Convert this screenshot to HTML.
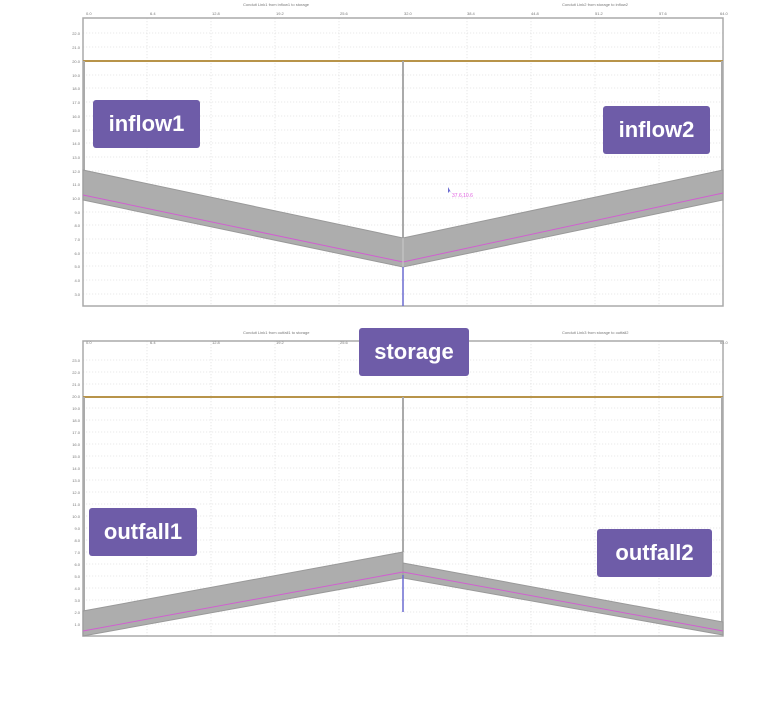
<!DOCTYPE html>
<html><head><meta charset="utf-8"><style>
html,body{margin:0;padding:0;background:#fff;width:764px;height:710px;overflow:hidden;font-family:"Liberation Sans",sans-serif}
.lbl{position:absolute;background:#6e5ca8;color:#fff;font-weight:bold;font-size:22px;border-radius:3px;display:flex;align-items:center;justify-content:center;box-sizing:border-box}
svg text{font-family:"Liberation Sans",sans-serif;fill:#777;font-size:4px}
</style></head><body>
<svg width="764" height="710" style="position:absolute;left:0;top:0">
<g stroke="#e2e2e2" stroke-width="0.8" stroke-dasharray="1.2,1.8">
<line x1="147" y1="18" x2="147" y2="306"/><line x1="211" y1="18" x2="211" y2="306"/><line x1="275" y1="18" x2="275" y2="306"/><line x1="339" y1="18" x2="339" y2="306"/><line x1="467" y1="18" x2="467" y2="306"/><line x1="531" y1="18" x2="531" y2="306"/><line x1="595" y1="18" x2="595" y2="306"/><line x1="659" y1="18" x2="659" y2="306"/>
<line x1="83" y1="33" x2="723" y2="33"/><line x1="83" y1="47" x2="723" y2="47"/><line x1="83" y1="75" x2="723" y2="75"/><line x1="83" y1="88" x2="723" y2="88"/><line x1="83" y1="102" x2="723" y2="102"/><line x1="83" y1="116" x2="723" y2="116"/><line x1="83" y1="130" x2="723" y2="130"/><line x1="83" y1="143" x2="723" y2="143"/><line x1="83" y1="157" x2="723" y2="157"/><line x1="83" y1="171" x2="723" y2="171"/><line x1="83" y1="184" x2="723" y2="184"/><line x1="83" y1="198" x2="723" y2="198"/><line x1="83" y1="212" x2="723" y2="212"/><line x1="83" y1="225" x2="723" y2="225"/><line x1="83" y1="239" x2="723" y2="239"/><line x1="83" y1="253" x2="723" y2="253"/><line x1="83" y1="266" x2="723" y2="266"/><line x1="83" y1="280" x2="723" y2="280"/><line x1="83" y1="294" x2="723" y2="294"/>
<line x1="147" y1="341" x2="147" y2="636"/><line x1="211" y1="341" x2="211" y2="636"/><line x1="275" y1="341" x2="275" y2="636"/><line x1="339" y1="341" x2="339" y2="636"/><line x1="467" y1="341" x2="467" y2="636"/><line x1="531" y1="341" x2="531" y2="636"/><line x1="595" y1="341" x2="595" y2="636"/><line x1="659" y1="341" x2="659" y2="636"/>
<line x1="83" y1="360" x2="723" y2="360"/><line x1="83" y1="372" x2="723" y2="372"/><line x1="83" y1="384" x2="723" y2="384"/><line x1="83" y1="408" x2="723" y2="408"/><line x1="83" y1="420" x2="723" y2="420"/><line x1="83" y1="432" x2="723" y2="432"/><line x1="83" y1="444" x2="723" y2="444"/><line x1="83" y1="456" x2="723" y2="456"/><line x1="83" y1="468" x2="723" y2="468"/><line x1="83" y1="480" x2="723" y2="480"/><line x1="83" y1="492" x2="723" y2="492"/><line x1="83" y1="504" x2="723" y2="504"/><line x1="83" y1="516" x2="723" y2="516"/><line x1="83" y1="528" x2="723" y2="528"/><line x1="83" y1="540" x2="723" y2="540"/><line x1="83" y1="552" x2="723" y2="552"/><line x1="83" y1="564" x2="723" y2="564"/><line x1="83" y1="576" x2="723" y2="576"/><line x1="83" y1="588" x2="723" y2="588"/><line x1="83" y1="600" x2="723" y2="600"/><line x1="83" y1="612" x2="723" y2="612"/><line x1="83" y1="624" x2="723" y2="624"/>
</g>
<text x="243" y="6">Conduit Link1 from inflow1 to storage</text>
<text x="562" y="6">Conduit Link2 from storage to inflow2</text>
<text x="243" y="334">Conduit Link1 from outfall1 to storage</text>
<text x="562" y="334">Conduit Link3 from storage to outfall2</text>
<g>
<text x="86" y="15">0.0</text><text x="150" y="15">6.4</text><text x="212" y="15">12.8</text><text x="276" y="15">19.2</text><text x="340" y="15">25.6</text><text x="404" y="15">32.0</text><text x="467" y="15">38.4</text><text x="531" y="15">44.8</text><text x="595" y="15">51.2</text><text x="659" y="15">57.6</text><text x="720" y="15">64.0</text>
<text x="86" y="344">0.0</text><text x="150" y="344">6.4</text><text x="212" y="344">12.8</text><text x="276" y="344">19.2</text><text x="340" y="344">25.6</text><text x="720" y="344">64.0</text>
</g>
<g text-anchor="end">
<text x="80" y="35">22.0</text><text x="80" y="49">21.0</text><text x="80" y="63">20.0</text><text x="80" y="77">19.0</text><text x="80" y="90">18.0</text><text x="80" y="104">17.0</text><text x="80" y="118">16.0</text><text x="80" y="132">15.0</text><text x="80" y="145">14.0</text><text x="80" y="159">13.0</text><text x="80" y="173">12.0</text><text x="80" y="186">11.0</text><text x="80" y="200">10.0</text><text x="80" y="214">9.0</text><text x="80" y="227">8.0</text><text x="80" y="241">7.0</text><text x="80" y="255">6.0</text><text x="80" y="268">5.0</text><text x="80" y="282">4.0</text><text x="80" y="296">3.0</text>
<text x="80" y="362">23.0</text><text x="80" y="374">22.0</text><text x="80" y="386">21.0</text><text x="80" y="398">20.0</text><text x="80" y="410">19.0</text><text x="80" y="422">18.0</text><text x="80" y="434">17.0</text><text x="80" y="446">16.0</text><text x="80" y="458">15.0</text><text x="80" y="470">14.0</text><text x="80" y="482">13.0</text><text x="80" y="494">12.0</text><text x="80" y="506">11.0</text><text x="80" y="518">10.0</text><text x="80" y="530">9.0</text><text x="80" y="542">8.0</text><text x="80" y="554">7.0</text><text x="80" y="566">6.0</text><text x="80" y="578">5.0</text><text x="80" y="590">4.0</text><text x="80" y="602">3.0</text><text x="80" y="614">2.0</text><text x="80" y="626">1.0</text>
</g>
<rect x="83" y="18" width="640" height="288" fill="none" stroke="#aaa" stroke-width="1.5"/>
<line x1="83" y1="61" x2="723" y2="61" stroke="#b8944a" stroke-width="2"/>
<line x1="403" y1="61" x2="403" y2="240" stroke="#aaa" stroke-width="2"/>
<line x1="84" y1="61" x2="84" y2="170" stroke="#aaa" stroke-width="2"/>
<line x1="722" y1="61" x2="722" y2="170" stroke="#aaa" stroke-width="2"/>
<polygon points="83,170 403,238 723,170 723,200 403,267 83,200" fill="#adadad" stroke="#999" stroke-width="1"/>
<polyline points="83,195 403,262 723,193" fill="none" stroke="#d060d0" stroke-width="1"/>
<line x1="403" y1="238" x2="403" y2="267" stroke="#ccc" stroke-width="1"/>
<line x1="403" y1="267" x2="403" y2="306" stroke="#6a6ad0" stroke-width="1.5"/>
<path d="M448,187 L448,193 L450,191 L452,194 Z" fill="#6a6ad0"/>
<text x="452" y="197" style="fill:#e060e0;font-size:5px">37.6,10.6</text>
<rect x="83" y="341" width="640" height="295" fill="none" stroke="#aaa" stroke-width="1.5"/>
<line x1="83" y1="397" x2="723" y2="397" stroke="#b8944a" stroke-width="2"/>
<line x1="403" y1="397" x2="403" y2="552" stroke="#aaa" stroke-width="2"/>
<line x1="84" y1="397" x2="84" y2="611" stroke="#aaa" stroke-width="2"/>
<line x1="722" y1="397" x2="722" y2="622" stroke="#aaa" stroke-width="2"/>
<polygon points="83,611 403,552 403,578 83,636" fill="#adadad" stroke="#999" stroke-width="1"/>
<polygon points="403,563 723,622 723,635 403,578" fill="#adadad" stroke="#999" stroke-width="1"/>
<polyline points="83,631 403,572 723,631" fill="none" stroke="#d060d0" stroke-width="1"/>
<line x1="403" y1="575" x2="403" y2="612" stroke="#6a6ad0" stroke-width="1.5"/>
</svg>
<div class="lbl" style="left:93px;top:100px;width:107px;height:48px">inflow1</div>
<div class="lbl" style="left:603px;top:106px;width:107px;height:48px">inflow2</div>
<div class="lbl" style="left:359px;top:328px;width:110px;height:48px">storage</div>
<div class="lbl" style="left:89px;top:508px;width:108px;height:48px">outfall1</div>
<div class="lbl" style="left:597px;top:529px;width:115px;height:48px">outfall2</div>
</body></html>
